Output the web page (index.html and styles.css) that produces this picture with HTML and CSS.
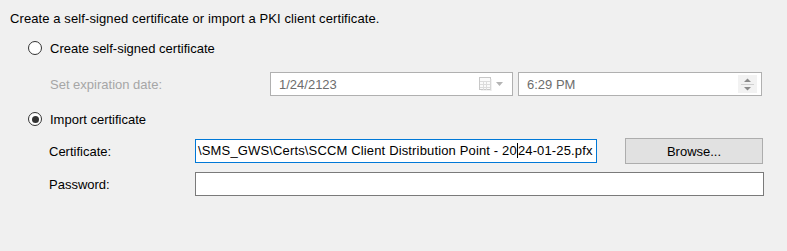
FILE: index.html
```html
<!DOCTYPE html>
<html>
<head>
  <title>Client Certificate</title>
  <link rel="stylesheet" href="styles.css">
</head>
<body>

  <div class="panel">
    <div class="intro">Create a self-signed certificate or import a PKI client certificate.</div>

    <label class="option">
      <span class="radio"></span>
      <span>Create self-signed certificate</span>
    </label>

    <div class="row expiry">
      <span class="label disabled">Set expiration date:</span>
      <div class="box date">
        <span class="value">1/24/2123</span>
        <svg class="cal" width="13" height="14" viewBox="0 0 13 14">
          <rect x="0.5" y="0.5" width="11" height="12" fill="#fafafa" stroke="#c8c8c8"/>
          <path d="M1 4.5h10M1 7.5h10M1 10.5h10M4.5 4v9M7.5 4v9" stroke="#dcdcdc"/>
          <path d="M12 2v12H2" stroke="#e4e4e4" fill="none"/>
        </svg>
        <svg class="arrow" width="8" height="5" viewBox="0 0 8 5">
          <path d="M0 0h7L3.5 4z" fill="#b4b4b4"/>
        </svg>
      </div>
      <div class="box time">
        <span class="value">6:29 PM</span>
        <span class="spin">
          <svg width="19" height="18" viewBox="0 0 19 18">
            <path d="M6 7h7L9.5 3.5z" fill="#8a8a8a"/>
            <path d="M3 9.5h13" stroke="#d0d0d0"/>
            <path d="M6 12h7L9.5 15.5z" fill="#8a8a8a"/>
          </svg>
        </span>
      </div>
    </div>

    <label class="option">
      <span class="radio checked"></span>
      <span>Import certificate</span>
    </label>

    <div class="row cert">
      <span class="label">Certificate:</span>
      <div class="field focused">\SMS_GWS\Certs\SCCM Client Distribution Point - 20<span class="caret"></span>24-01-25.pfx</div>
      <button class="browse">Browse...</button>
    </div>

    <div class="row password">
      <span class="label">Password:</span>
      <div class="field wide"></div>
    </div>
  </div>

</body>
</html>
```

FILE: styles.css
```css
body {
  margin: 0;
  background-color: #f0f0f0;
  font-family: "Liberation Sans", Arial, sans-serif;
  font-size: 13px;
  color: #000;
}

.panel {
  padding: 11px 0 0 10px;
  height: 240px;
}

.intro {
  line-height: 15px;
  letter-spacing: 0.1px;
}

.option {
  display: flex;
  align-items: center;
  height: 20px;
  margin-left: 18px;
  gap: 8px;
}

.option:first-of-type {
  margin-top: 12px;
}

.radio {
  width: 12px;
  height: 12px;
  border: 1px solid #333;
  border-radius: 50%;
  background: #fff;
  position: relative;
}

.radio.checked::after {
  content: "";
  position: absolute;
  left: 2.5px;
  top: 2.5px;
  width: 7px;
  height: 7px;
  border-radius: 50%;
  background: #333;
}

.row {
  display: flex;
  align-items: center;
}

.label {
  width: 146px;
  padding-left: 39px;
  flex-shrink: 0;
}

.disabled {
  color: #a6a6a6;
}

.expiry {
  margin-top: 14px;
  margin-bottom: 13px;
}

.expiry .label {
  width: 220px;
  padding-left: 40px;
}

.box {
  height: 22px;
  border: 1px solid #b0b0b0;
  background: #fff;
  display: flex;
  align-items: center;
  box-sizing: content-box;
}

.box .value {
  color: #6d6d6d;
  padding-left: 8px;
  flex: 1;
}

.date {
  width: 241px;
}

.date .cal {
  margin-right: 4px;
}

.date .arrow {
  margin-right: 8px;
}

.time {
  width: 242px;
  margin-left: 5px;
}

.spin {
  width: 19px;
  height: 18px;
  margin-right: 4px;
  background: #f2f2f2;
  display: flex;
}

.cert {
  margin-top: 9px;
}

.field {
  height: 22px;
  line-height: 22px;
  border: 1px solid #7a7a7a;
  background: #fff;
  padding-left: 2px;
  white-space: nowrap;
  overflow: hidden;
  box-sizing: content-box;
}

.field.focused {
  width: 398px;
  border-color: #0078d7;
  letter-spacing: 0.15px;
}

.caret {
  display: inline-block;
  width: 1px;
  height: 15px;
  background: #000;
  vertical-align: -3px;
}

.browse {
  margin-left: 28px;
  width: 138px;
  height: 26px;
  background: #e1e1e1;
  border: 1px solid #adadad;
  font-family: inherit;
  font-size: 13px;
  color: #000;
  padding: 0;
}

.password {
  margin-top: 8px;
}

.field.wide {
  width: 565px;
}
```
